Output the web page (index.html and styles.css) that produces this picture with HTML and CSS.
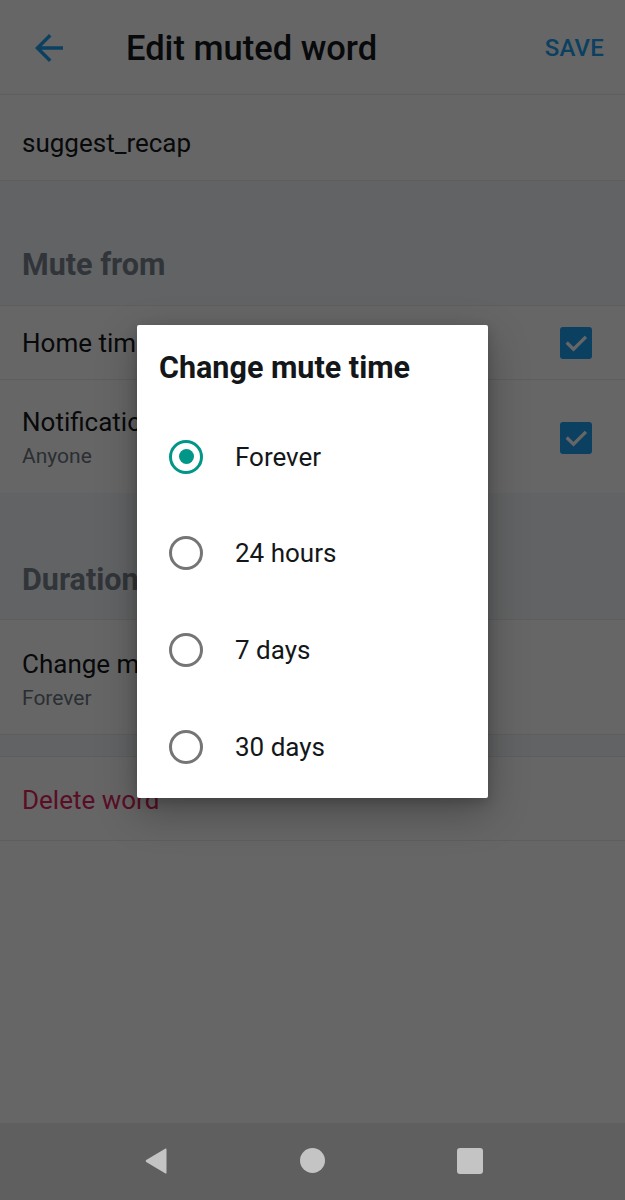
FILE: index.html
```html
<!DOCTYPE html>
<html lang="en">
<head>
<meta charset="utf-8">
<title>Edit muted word</title>
<link rel="stylesheet" href="styles.css">
</head>
<body>
<div class="app">
  <header class="topbar">
    <svg class="back" viewBox="0 0 24 24" width="42" height="42"><path d="M20 11H7.83l5.59-5.59L12 4l-8 8 8 8 1.41-1.41L7.83 13H20v-2z"/></svg>
    <h1 class="title">Edit muted word</h1>
    <span class="save">SAVE</span>
  </header>

  <div class="input-row">suggest_recap</div>

  <div class="section-head first">Mute from</div>

  <div class="row short bordered">
    <span class="row-title">Home timeline</span>
    <span class="checkbox"><svg viewBox="0 0 24 24" width="32" height="32"><path d="M5.5 12.5 L10 17 L19 8"/></svg></span>
  </div>

  <div class="row tall">
    <div class="two-line">
      <span class="row-title">Notifications</span>
      <span class="row-sub">Anyone</span>
    </div>
    <span class="checkbox"><svg viewBox="0 0 24 24" width="32" height="32"><path d="M5.5 12.5 L10 17 L19 8"/></svg></span>
  </div>

  <div class="section-head second">Duration</div>

  <div class="row tall bordered">
    <div class="two-line">
      <span class="row-title">Change mute time</span>
      <span class="row-sub">Forever</span>
    </div>
  </div>

  <div class="gap"></div>

  <div class="row delete bordered">
    <span class="delete-text">Delete word</span>
  </div>

  <div class="scrim">
    <div class="dialog">
      <h2 class="dialog-title">Change mute time</h2>
      <ul class="options">
        <li class="option"><span class="radio checked"></span><span class="option-label">Forever</span></li>
        <li class="option"><span class="radio"></span><span class="option-label">24 hours</span></li>
        <li class="option"><span class="radio"></span><span class="option-label">7 days</span></li>
        <li class="option"><span class="radio"></span><span class="option-label">30 days</span></li>
      </ul>
    </div>
  </div>
</div>

<nav class="navbar">
  <span class="nav-slot"><svg viewBox="0 0 24 28" width="24" height="28"><path d="M21.5 1.5 Q22.5 1 22.5 2.5 V25.5 Q22.5 27 21.5 26.5 L2.2 15 Q1 14 2.2 13 Z"/></svg></span>
  <span class="nav-slot"><span class="nav-home"></span></span>
  <span class="nav-slot"><span class="nav-recent"></span></span>
</nav>
</body>
</html>
```

FILE: styles.css
```css
* {
  box-sizing: border-box;
}

html, body {
  margin: 0;
  padding: 0;
}

body {
  width: 625px;
  height: 1200px;
  overflow: hidden;
  font-family: Roboto, "Noto Sans", "Liberation Sans", sans-serif;
  background: #ffffff;
  color: #14171a;
  display: flex;
  flex-direction: column;
}

.app {
  position: relative;
  height: 1123px;
  background: #ffffff;
  display: flex;
  flex-direction: column;
}

.topbar {
  height: 95px;
  border-bottom: 1px solid #e6ecf0;
  display: flex;
  align-items: center;
  padding: 1px 21px 0 28px;
}

.back {
  fill: #1da1f2;
  flex: none;
}

.title {
  margin: 0 0 0 56px;
  font-size: 34.5px;
  font-weight: 500;
  line-height: 40px;
  color: #14171a;
  flex: 1;
}

.save {
  font-size: 24px;
  font-weight: 500;
  color: #1da1f2;
  letter-spacing: 0.2px;
}

.input-row {
  height: 86px;
  border-bottom: 1px solid #e6ecf0;
  display: flex;
  align-items: center;
  padding: 11px 22px 0;
  font-size: 26px;
  line-height: 32px;
}

.section-head {
  background: #f5f8fa;
  border-bottom: 1px solid #e6ecf0;
  display: flex;
  align-items: flex-end;
  padding: 0 22px 22px;
  font-size: 30.5px;
  font-weight: 700;
  line-height: 36px;
  color: #7a8590;
}

.section-head.first {
  height: 125px;
}

.section-head.second {
  height: 127px;
  padding-bottom: 21px;
}

.row {
  display: flex;
  align-items: center;
  justify-content: space-between;
  padding: 0 33px 0 22px;
}

.row.bordered {
  border-bottom: 1px solid #e6ecf0;
}

.row.short {
  height: 74px;
}

.row.tall {
  height: 113px;
  padding-top: 2px;
}

.row.tall.bordered {
  height: 115px;
  padding-top: 5px;
}

.row-title {
  font-size: 26px;
  line-height: 32px;
}

.two-line {
  display: flex;
  flex-direction: column;
  gap: 4px;
}

.row-sub {
  font-size: 21px;
  line-height: 28px;
  color: #6b7680;
}

.checkbox {
  width: 32px;
  height: 32px;
  border-radius: 3px;
  background: #1da1f2;
  display: flex;
  align-items: center;
  justify-content: center;
}

.checkbox svg {
  fill: none;
  stroke: #ffffff;
  stroke-width: 2.6;
  stroke-linecap: square;
  width: 30px;
  height: 30px;
}

.gap {
  height: 22px;
  background: #f5f8fa;
  border-bottom: 1px solid #e6ecf0;
}

.row.delete {
  height: 84px;
  padding-top: 2px;
}

.delete-text {
  font-size: 26px;
  line-height: 32px;
  color: #e0245e;
}

.scrim {
  position: absolute;
  inset: 0;
  background: rgba(0, 0, 0, 0.6);
  display: flex;
  align-items: center;
  justify-content: center;
}

.dialog {
  width: 351px;
  height: 473px;
  margin-top: -1px;
  background: #ffffff;
  border-radius: 2px;
  box-shadow: 0 14px 40px rgba(0, 0, 0, 0.28), 0 4px 12px rgba(0, 0, 0, 0.18);
  display: flex;
  flex-direction: column;
}

.dialog-title {
  margin: 0;
  padding: 26px 22px 24px;
  font-size: 30.5px;
  font-weight: 700;
  line-height: 34px;
  color: #14171a;
  white-space: nowrap;
}

.options {
  list-style: none;
  margin: 0;
  padding: 0;
  display: flex;
  flex-direction: column;
}

.option {
  height: 97px;
  display: flex;
  align-items: center;
  padding-left: 32px;
  gap: 32px;
}

.option:first-child {
  height: 96px;
}

.radio {
  width: 34px;
  height: 34px;
  border-radius: 50%;
  border: 3.5px solid #757575;
  display: flex;
  align-items: center;
  justify-content: center;
  flex: none;
}

.radio.checked {
  border-color: #009688;
}

.radio.checked::after {
  content: "";
  width: 15px;
  height: 15px;
  border-radius: 50%;
  background: #009688;
}

.option-label {
  font-size: 26px;
  line-height: 30px;
  color: #14171a;
}

.navbar {
  height: 77px;
  background: #5f5f5f;
  display: grid;
  grid-template-columns: 157px 157px 157px;
  justify-content: center;
  align-items: center;
}

.nav-slot {
  display: flex;
  justify-content: center;
  align-items: center;
  padding-bottom: 2px;
}

.nav-slot svg {
  fill: #c4c4c4;
}

.nav-home {
  width: 25px;
  height: 25px;
  border-radius: 50%;
  background: #c4c4c4;
}

.nav-recent {
  width: 26px;
  height: 26px;
  border-radius: 3px;
  background: #c4c4c4;
}
```
